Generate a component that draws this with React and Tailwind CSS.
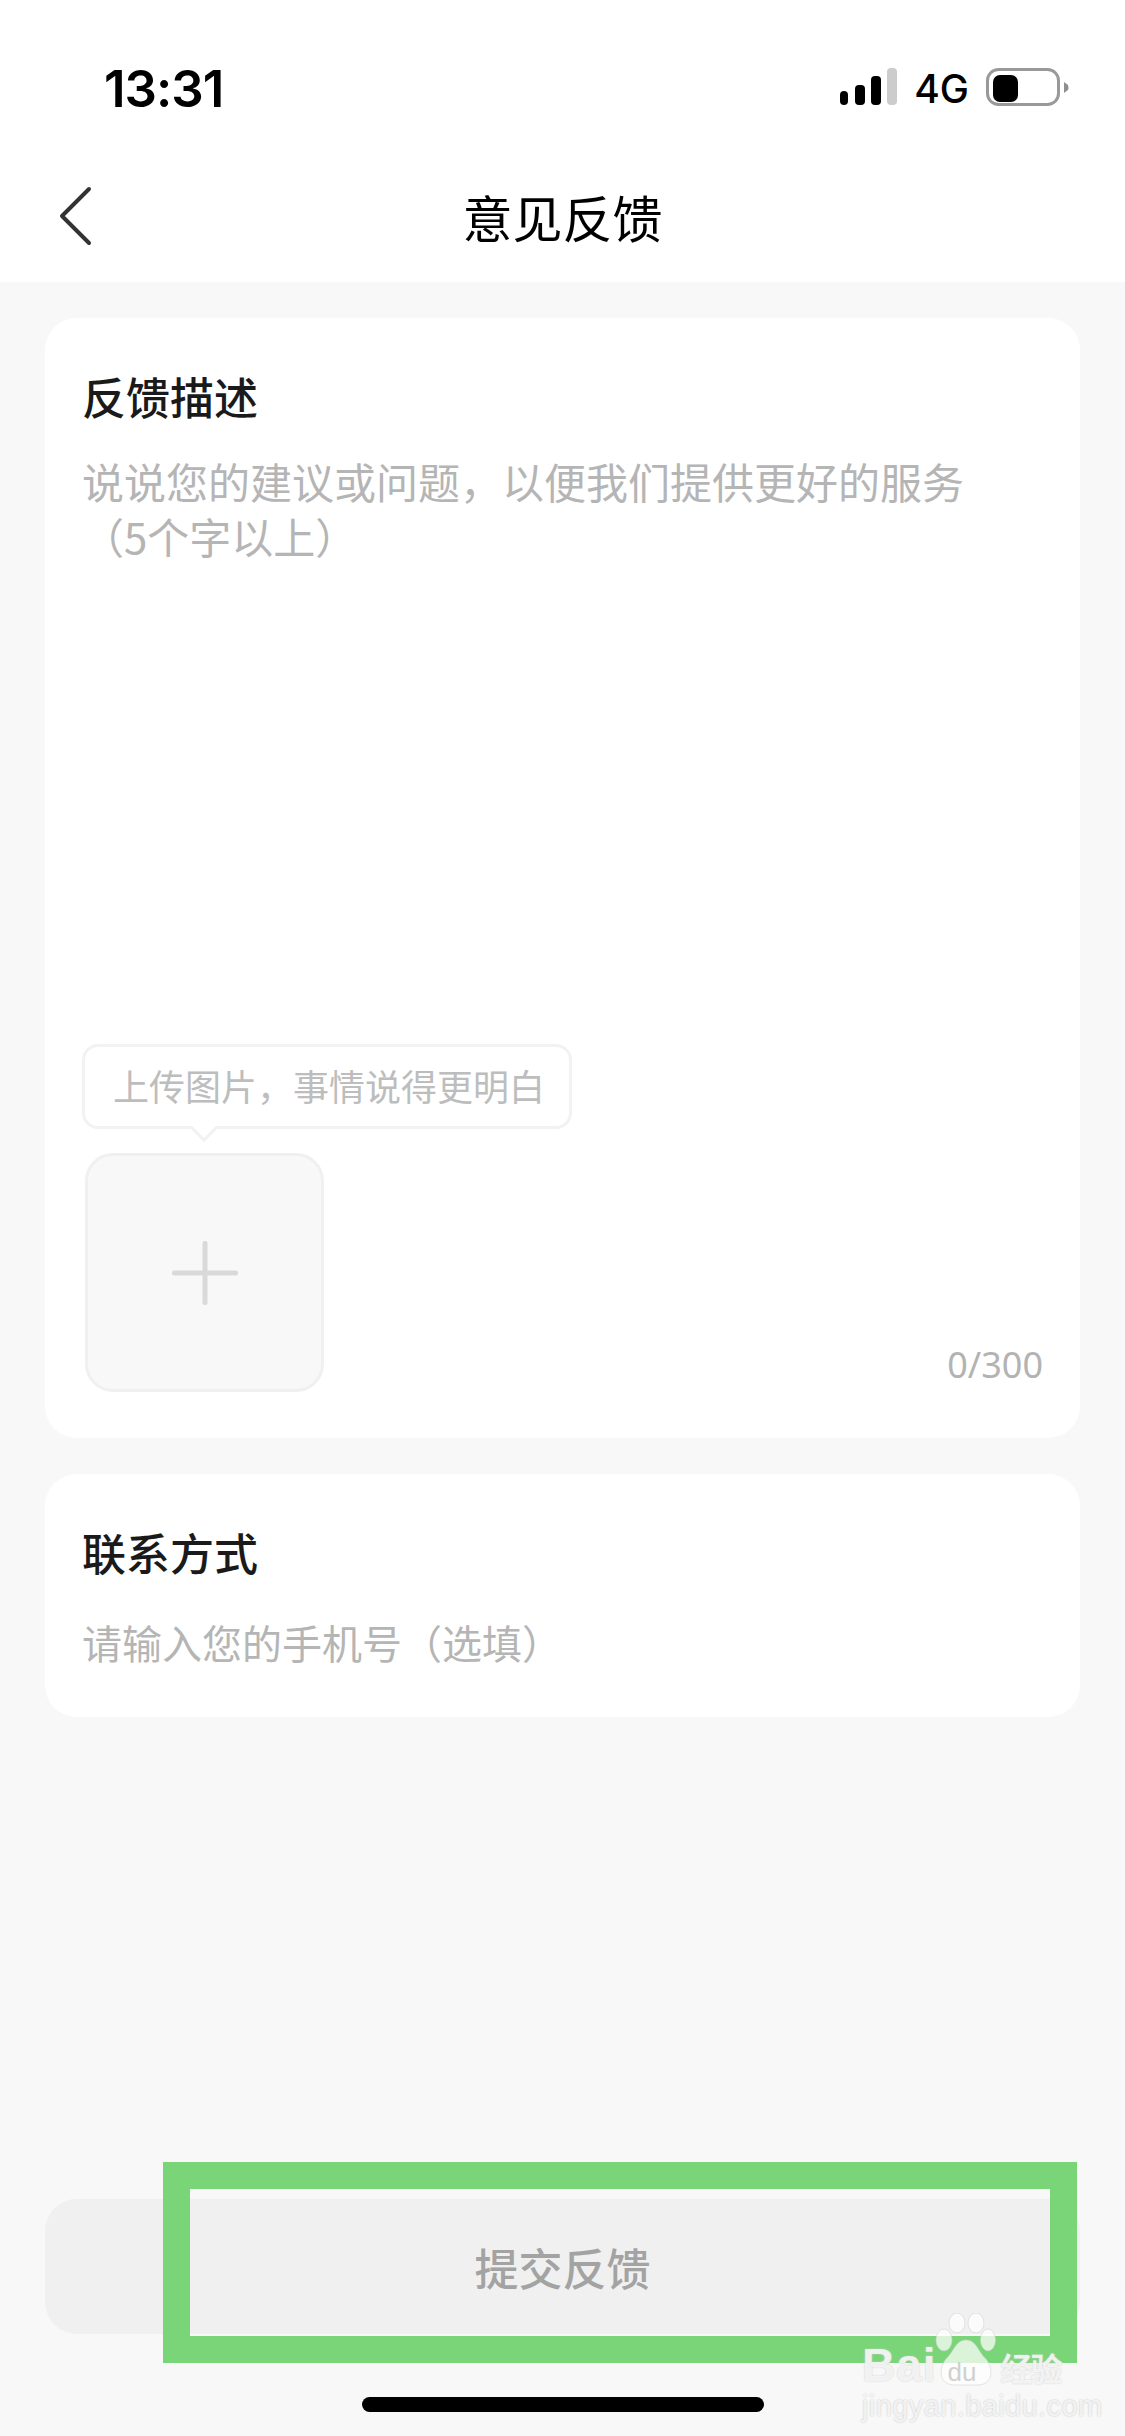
const cjk = { };
function Chevron() {
  return (
    <svg width="40" height="64" viewBox="0 0 40 64" fill="none" className="block">
      <path d="M32 5 L5 32 L32 59" transform="translate(0 0)" stroke="#333333" strokeWidth="4" strokeLinecap="round" strokeLinejoin="round" />
    </svg>
  );
}
function Signal() {
  return (
    <svg width="60" height="40" viewBox="0 0 60 40" className="block">
      <rect x="1" y="23" width="8" height="14" rx="4" fill="#000" />
      <rect x="16" y="17" width="10" height="20" rx="4" fill="#000" />
      <rect x="32" y="8" width="10" height="29" rx="4" fill="#000" />
      <rect x="48" y="0" width="10" height="37" rx="4" fill="#cccccc" />
    </svg>
  );
}
function Battery() {
  return (
    <svg width="84" height="40" viewBox="0 0 84 40" className="block">
      <rect x="1.5" y="1.5" width="71" height="35" rx="11" fill="#fff" stroke="#999999" strokeWidth="3" />
      <rect x="7" y="7" width="25" height="27" rx="7" fill="#000" />
      <path d="M78 14 L82 17 Q83 19.5 82 22 L78 25 Z" fill="#8f8f8f" />
    </svg>
  );
}
function Paw() {
  return (
    <svg width="62" height="74" viewBox="0 0 62 74" className="block">
      <g fill="#ffffff" fillOpacity="0.72" stroke="#cfcfcf" strokeOpacity="0.55" strokeWidth="1">
        <ellipse cx="9" cy="27" rx="8" ry="11" />
        <ellipse cx="22" cy="10" rx="8" ry="10" />
        <ellipse cx="41" cy="10" rx="8" ry="10" />
        <ellipse cx="53" cy="27" rx="7.5" ry="11" />
        <path d="M31 27 C21 27 19 38 12 45 C4 53 2 72 20 72 L42 72 C60 72 58 53 50 45 C43 38 41 27 31 27 Z" />
      </g>
    </svg>
  );
}
export default function App() {
  return (
    <div className="relative flex h-[2436px] w-[1125px] flex-col overflow-hidden bg-[#f8f8f8] font-['Noto_Sans_CJK_SC','Noto_Sans',sans-serif]">
      <div className="bg-white">
        <div className="flex h-[176px] items-center justify-between pl-[104px] pr-[55px]">
          <span className="font-['Inter',sans-serif] text-[51px] font-semibold leading-none tracking-[-1px] text-black">13:31</span>
          <div className="flex items-center">
            <Signal />
            <span className="ml-[15px] font-['Inter',sans-serif] text-[39px] font-medium leading-none text-black">4G</span>
            <div className="ml-[17px]"><Battery /></div>
          </div>
        </div>
        <div className="relative flex h-[106px] items-center justify-center pb-[26px]">
          <div className="absolute left-[57px] top-[8px]"><Chevron /></div>
          <span className="text-[50px] leading-none text-black">意见反馈</span>
        </div>
      </div>

      <div className="mx-[45px] mt-[36px] flex h-[1120px] flex-col rounded-[32px] bg-white px-[37px] pb-[46px] pt-[50px]">
        <div className="text-[44px] font-medium leading-[56px] text-[#1a1a1a]">反馈描述</div>
        <div className="mt-[29px] text-[42px] leading-[55px] text-[#b5b5b5]">
          <div>说说您的建议或问题，以便我们提供更好的服务</div>
          <div>（5个字以上）</div>
        </div>
        <div className="mt-auto">
          <div className="relative h-[85px] w-[490px] rounded-[16px] border-[3px] border-[#f2f2f2] bg-white pl-[28px] text-[36px] leading-[76px] text-[#bdbdbd]">
            上传图片，事情说得更明白
            <div className="absolute bottom-[-12px] left-[109px] size-[20px] rotate-45 border-b-[3px] border-r-[3px] border-[#f2f2f2] bg-white"></div>
          </div>
          <div className="mt-[24px] flex items-end justify-between">
            <div className="ml-[3px] flex size-[239px] items-center justify-center rounded-[28px] border-[3px] border-[#f0f0f0] bg-[#f8f8f8]">
              <svg width="66" height="64" viewBox="0 0 66 64" className="block blur-[0.6px]">
                <rect x="0" y="29.5" width="66" height="5" rx="2" fill="#d9d9d9" />
                <rect x="30.5" y="0" width="5" height="64" rx="2" fill="#d9d9d9" />
              </svg>
            </div>
            <span className="mb-[5px] font-['Noto_Sans',sans-serif] text-[36px] leading-[44px] text-[#b3b3b3]">0/300</span>
          </div>
        </div>
      </div>

      <div className="mx-[45px] mt-[36px] h-[243px] rounded-[32px] bg-white px-[37px] pt-[50px]">
        <div className="text-[44px] font-medium leading-[56px] text-[#1a1a1a]">联系方式</div>
        <div className="mt-[34px] text-[40px] leading-[56px] text-[#b5b5b5]">请输入您的手机号（选填）</div>
      </div>

      <div className="mx-[45px] mt-auto flex h-[135px] items-center justify-center rounded-[32px] bg-[#f0f0f0] text-[44px] font-medium text-[#a3a3a3]">提交反馈</div>
      <div className="mx-auto mb-[24px] mt-[63px] h-[15px] w-[402px] rounded-full bg-black"></div>

      <div className="absolute left-[163px] top-[2162px] h-[201px] w-[914px] border-[27px] border-[#7ad578]"></div>

      <div className="absolute left-[862px] top-[2317px] w-[204px] text-white/75">
        <div className="flex h-[70px] items-end">
          <span className="font-['Liberation_Sans',sans-serif] text-[46px] font-bold leading-[44px] tracking-[1px] [text-shadow:0_0_2px_#c8c8c8]">Bai</span>
          <div className="relative ml-[-2px]">
            <Paw />
            <span className="absolute bottom-[2px] left-[13px] font-['Liberation_Sans',sans-serif] text-[26px] leading-none text-[#d0d0d0]">du</span>
          </div>
          <span className="ml-[4px] text-[32px] font-bold leading-[40px] tracking-[-2px] [text-shadow:0_0_2px_#c8c8c8]">经验</span>
        </div>
        <div className="mt-[3px] whitespace-nowrap font-['Liberation_Sans',sans-serif] text-[29px] leading-[32px] tracking-[0.4px] [text-shadow:0_0_2px_#c0c0c0]">jingyan.baidu.com</div>
      </div>
    </div>
  );
}
